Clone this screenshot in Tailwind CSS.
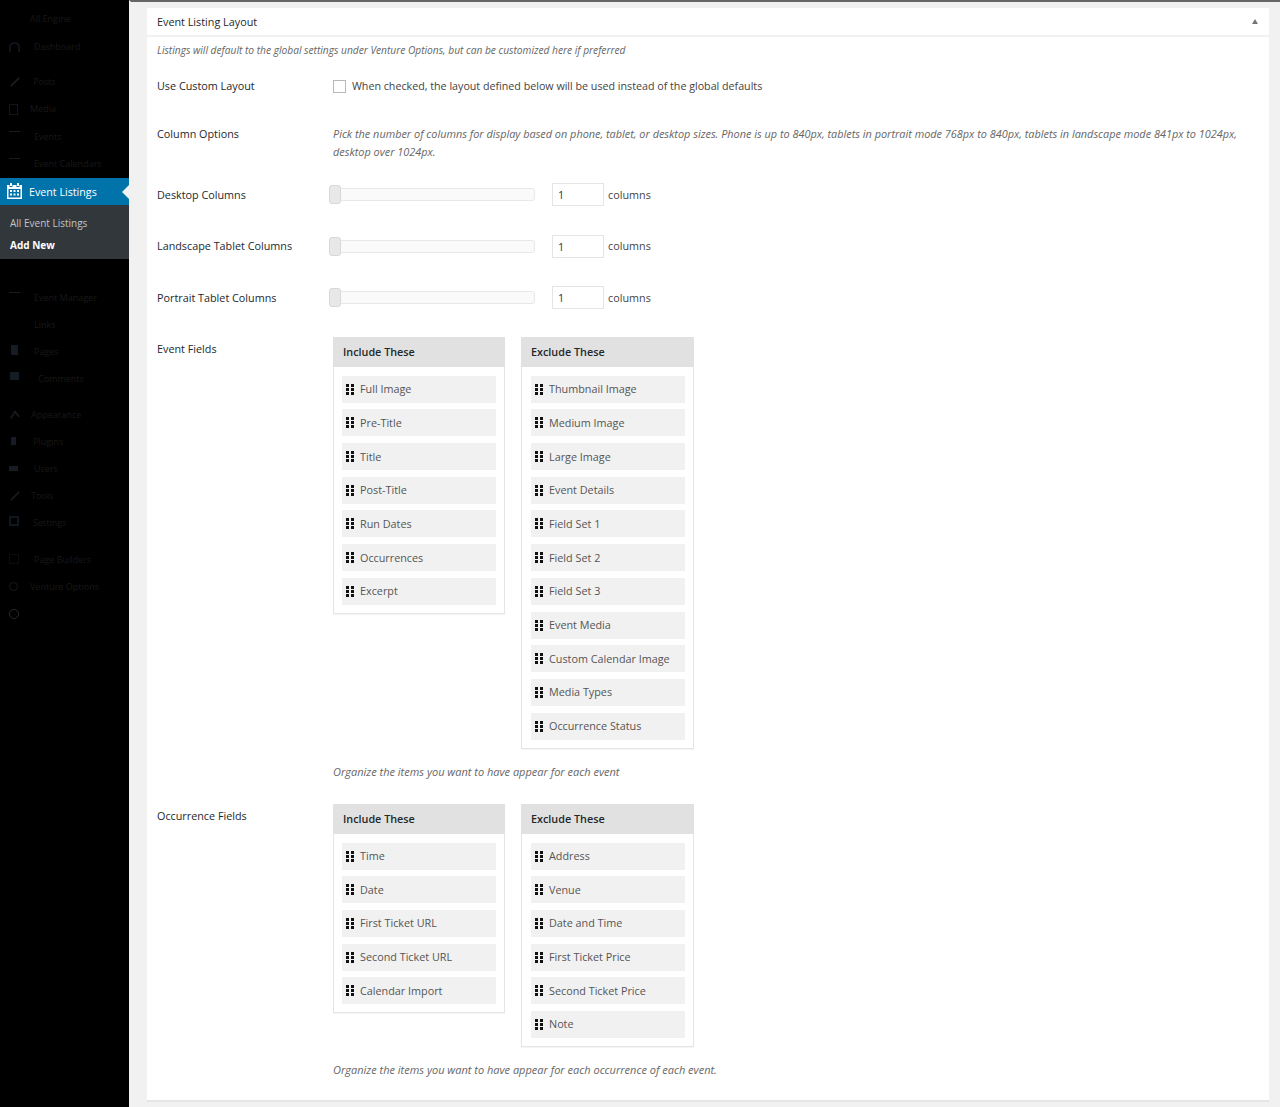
<!DOCTYPE html>
<html lang="en">
<head>
  <meta charset="UTF-8" />
  <meta name="viewport" content="width=device-width, initial-scale=1.0" />
  <title>Event Listing Layout</title>
  <script src="https://cdn.jsdelivr.net/npm/@tailwindcss/browser@4"></script>
</head>
<body class="bg-[#f1f1f1] text-[#444] font-['Open_Sans',sans-serif] text-[10.8px] leading-[18px] overflow-hidden">
<div class="flex h-[1107px] w-[1280px]">

  <!-- sidebar -->
  <aside class="w-[129px] shrink-0 bg-black text-[#181818] text-[9px]">
    <div class="h-[178px] pt-[10px]">
      <div class="h-[18px] pl-[30px]">All Engine</div>
      <div class="h-[18px] mt-[10px] pl-[34px] flex items-center relative">
        <svg class="absolute left-[9px] w-[11px] h-[11px]" viewBox="0 0 12 12" fill="none" stroke="#10161d" stroke-width="2"><path d="M1 11V6a5 5 0 0 1 10 0v5"/></svg>
        Dashboard</div>
      <div class="h-[18px] mt-[17px] pl-[33px] flex items-center relative">
        <svg class="absolute left-[10px] w-[10px] h-[10px]" viewBox="0 0 12 12" fill="none" stroke="#1a1f26" stroke-width="2"><path d="M1 11 11 1"/></svg>
        Posts</div>
      <div class="h-[18px] mt-[9px] pl-[30px] flex items-center relative">
        <span class="absolute left-[9px] w-[9px] h-[11px] border border-[#10161d]"></span>
        Media</div>
      <div class="h-[18px] mt-[10px] pl-[34px] flex items-center relative">
        <span class="absolute left-[9px] top-[3px] w-[11px] h-px bg-[#151b24]"></span>
        Events</div>
      <div class="h-[18px] mt-[9px] pl-[34px] flex items-center relative">
        <span class="absolute left-[9px] top-[3px] w-[11px] h-px bg-[#151b24]"></span>
        Event Calendars</div>
    </div>

    <div class="h-[27px] bg-[#0073aa] text-white text-[10.7px] flex items-center pl-[29px] relative">
      <svg class="absolute left-[7px] top-[5px] w-[15px] h-[16px]" viewBox="0 0 15 16" fill="#fff">
        <path d="M3 0h2v3H3zM10 0h2v3h-2z"/>
        <path fill-rule="evenodd" d="M0 2h2.500v2h3V2h4v2h3V2H15v14H0zM1.500 6v8.500h12V6zM3 7h2v2H3zM6.500 7h2v2h-2zM10 7h2v2h-2zM3 10.500h2v2H3zM6.500 10.500h2v2h-2zM10 10.500h2v2h-2z"/>
      </svg>
      Event Listings
      <span class="absolute right-0 top-[7px] border-y-[7px] border-y-transparent border-r-[7px] border-r-[#f1f1f1]"></span>
    </div>

    <div class="h-[54px] bg-[#32373c] text-[10px] pt-[9px] pl-[10px] text-[#c2c4c6]">
      <div class="h-[18px] leading-[18px]">All Event Listings</div>
      <div class="h-[18px] mt-[4px] leading-[18px] text-white font-bold">Add New</div>
    </div>

    <div class="pt-[30px]">
      <div class="h-[18px] pl-[34px] flex items-center relative">
        <span class="absolute left-[9px] top-[3px] w-[11px] h-px bg-[#151b24]"></span>
        Event Manager</div>
      <div class="h-[18px] mt-[9px] pl-[34px]">Links</div>
      <div class="h-[18px] mt-[9px] pl-[34px] flex items-center relative">
        <span class="absolute left-[11px] top-[2px] w-[7px] h-[10px] bg-[#161c24]"></span>
        Pages</div>
      <div class="h-[18px] mt-[9px] pl-[38px] flex items-center relative">
        <span class="absolute left-[10px] top-[2px] w-[9px] h-[8px] bg-[#161c24]"></span>
        Comments</div>
      <div class="h-[18px] mt-[18px] pl-[31px] flex items-center relative">
        <svg class="absolute left-[10px] w-[10px] h-[10px]" viewBox="0 0 12 12" fill="none" stroke="#161c24" stroke-width="2"><path d="M1 10 6 2l5 6"/></svg>
        Appearance</div>
      <div class="h-[18px] mt-[9px] pl-[33px] flex items-center relative">
        <span class="absolute left-[11px] top-[4px] w-[5px] h-[8px] bg-[#161c24]"></span>
        Plugins</div>
      <div class="h-[18px] mt-[9px] pl-[34px] flex items-center relative">
        <span class="absolute left-[9px] top-[6px] w-[9px] h-[5px] bg-[#161c24]"></span>
        Users</div>
      <div class="h-[18px] mt-[9px] pl-[31px] flex items-center relative">
        <svg class="absolute left-[10px] w-[10px] h-[10px]" viewBox="0 0 12 12" fill="none" stroke="#161c24" stroke-width="2"><path d="M1 11 11 1"/></svg>
        Tools</div>
      <div class="h-[18px] mt-[9px] pl-[33px] flex items-center relative">
        <span class="absolute left-[9px] top-[2px] w-[10px] h-[10px] border-2 border-[#10161d]"></span>
        Settings</div>
      <div class="h-[18px] mt-[19px] pl-[34px] flex items-center relative">
        <span class="absolute left-[9px] top-[3px] w-[10px] h-[10px] border border-[#0c0c0c]"></span>
        Page Builders</div>
      <div class="h-[18px] mt-[9px] pl-[30px] flex items-center relative">
        <span class="absolute left-[9px] top-[4px] w-[9px] h-[9px] rounded-full border border-[#1a1a1a]"></span>
        Venture Options</div>
      <div class="h-[18px] mt-[9px] relative">
        <span class="absolute left-[9px] top-[4px] w-[10px] h-[10px] rounded-full border border-[#2a2a2a]"></span>
      </div>
    </div>
  </aside>

  <!-- content -->
  <main class="flex-1 min-w-0 border-t-2 border-[#666] border-l-2 border-l-[#f1f1f1]">
    <div class="ml-[16px] mr-[11px] mt-[6px] h-[1094px] bg-white border-b-2 border-[#e5e5e5]">
      <div class="h-[29px] border-b-2 border-[#f1f1f1] pl-[10px] pr-[11px] flex items-center justify-between text-[#23282d]">
        <span>Event Listing Layout</span>
        <span class="border-x-[3px] border-x-transparent border-b-[5px] border-b-[#72777c]"></span>
      </div>

      <p class="pl-[10px] mt-[4px] text-[10.2px] italic text-[#666]">Listings will default to the global settings under Venture Options, but can be customized here if preferred</p>

      <div class="grid grid-cols-[176px_1fr] pl-[10px] pr-[16px] mt-[18px]">
        <div class="text-[#23282d]">Use Custom Layout</div>
        <div class="flex items-center gap-[6px] h-[18px] text-[10.7px]">
          <span class="w-[13px] h-[13px] border border-[#b4b9be] bg-white"></span>
          <span>When checked, the layout defined below will be used instead of the global defaults</span>
        </div>
      </div>

      <div class="grid grid-cols-[176px_1fr] pl-[10px] pr-[16px] mt-[30px]">
        <div class="text-[#23282d]">Column Options</div>
        <p class="text-[10.9px] italic text-[#666]">Pick the number of columns for display based on phone, tablet, or desktop sizes. Phone is up to 840px, tablets in portrait mode 768px to 840px, tablets in landscape mode 841px to 1024px, desktop over 1024px.</p>
      </div>

      <div class="grid grid-cols-[176px_1fr] pl-[10px] mt-[21.500px] items-center h-[24px]">
        <div class="text-[#23282d]">Desktop Columns</div>
        <div class="flex items-center">
          <div class="relative w-[202px] h-[13px] bg-[#fafafa] border border-[#e8e8e8] rounded-[3px] mr-[17px]">
            <span class="absolute left-[-5px] top-[-4px] w-[12px] h-[19px] bg-[#e8e8e8] border border-[#d8d8d8] rounded-[3px]"></span>
          </div>
          <span class="w-[52px] h-[23px] border border-[#e5e5e5] pl-[5px] leading-[21px] text-[#32373c]">1</span>
          <span class="ml-[4px]">columns</span>
        </div>
      </div>

      <div class="grid grid-cols-[176px_1fr] pl-[10px] mt-[27.500px] items-center h-[24px]">
        <div class="text-[#23282d]">Landscape Tablet Columns</div>
        <div class="flex items-center">
          <div class="relative w-[202px] h-[13px] bg-[#fafafa] border border-[#e8e8e8] rounded-[3px] mr-[17px]">
            <span class="absolute left-[-5px] top-[-4px] w-[12px] h-[19px] bg-[#e8e8e8] border border-[#d8d8d8] rounded-[3px]"></span>
          </div>
          <span class="w-[52px] h-[23px] border border-[#e5e5e5] pl-[5px] leading-[21px] text-[#32373c]">1</span>
          <span class="ml-[4px]">columns</span>
        </div>
      </div>

      <div class="grid grid-cols-[176px_1fr] pl-[10px] mt-[27.500px] items-center h-[24px]">
        <div class="text-[#23282d]">Portrait Tablet Columns</div>
        <div class="flex items-center">
          <div class="relative w-[202px] h-[13px] bg-[#fafafa] border border-[#e8e8e8] rounded-[3px] mr-[17px]">
            <span class="absolute left-[-5px] top-[-4px] w-[12px] h-[19px] bg-[#e8e8e8] border border-[#d8d8d8] rounded-[3px]"></span>
          </div>
          <span class="w-[52px] h-[23px] border border-[#e5e5e5] pl-[5px] leading-[21px] text-[#32373c]">1</span>
          <span class="ml-[4px]">columns</span>
        </div>
      </div>

      <!-- event fields -->
      <div class="grid grid-cols-[176px_1fr] pl-[10px] mt-[27.500px]">
        <div class="text-[#23282d] pt-[3px]">Event Fields</div>
        <div>
          <div class="flex items-start gap-[16px] text-[#555]">
            <div class="w-[172px] border border-[#e5e5e5] shadow-[0_1px_1px_rgba(0,0,0,0.04)]">
              <div class="h-[30px] -m-px mb-0 bg-[#e1e1e1] pl-[10px] flex items-center font-semibold text-[#23282d]">Include These</div>
              <ul class="px-[8px] pt-[8.700px] pb-[3px] space-y-[6.700px]">
                <li class="h-[27px] bg-[#f1f1f1] flex items-center gap-[5px] pl-[4px]"><svg class="w-[9px] h-[11px]" viewBox="0 0 9 11" fill="#111"><path d="M0 0h3v3H0zM5 0h3v3H5zM0 4h3v3H0zM5 4h3v3H5zM0 8h3v3H0zM5 8h3v3H5z"/></svg>Full Image</li>
                <li class="h-[27px] bg-[#f1f1f1] flex items-center gap-[5px] pl-[4px]"><svg class="w-[9px] h-[11px]" viewBox="0 0 9 11" fill="#111"><path d="M0 0h3v3H0zM5 0h3v3H5zM0 4h3v3H0zM5 4h3v3H5zM0 8h3v3H0zM5 8h3v3H5z"/></svg>Pre-Title</li>
                <li class="h-[27px] bg-[#f1f1f1] flex items-center gap-[5px] pl-[4px]"><svg class="w-[9px] h-[11px]" viewBox="0 0 9 11" fill="#111"><path d="M0 0h3v3H0zM5 0h3v3H5zM0 4h3v3H0zM5 4h3v3H5zM0 8h3v3H0zM5 8h3v3H5z"/></svg>Title</li>
                <li class="h-[27px] bg-[#f1f1f1] flex items-center gap-[5px] pl-[4px]"><svg class="w-[9px] h-[11px]" viewBox="0 0 9 11" fill="#111"><path d="M0 0h3v3H0zM5 0h3v3H5zM0 4h3v3H0zM5 4h3v3H5zM0 8h3v3H0zM5 8h3v3H5z"/></svg>Post-Title</li>
                <li class="h-[27px] bg-[#f1f1f1] flex items-center gap-[5px] pl-[4px]"><svg class="w-[9px] h-[11px]" viewBox="0 0 9 11" fill="#111"><path d="M0 0h3v3H0zM5 0h3v3H5zM0 4h3v3H0zM5 4h3v3H5zM0 8h3v3H0zM5 8h3v3H5z"/></svg>Run Dates</li>
                <li class="h-[27px] bg-[#f1f1f1] flex items-center gap-[5px] pl-[4px]"><svg class="w-[9px] h-[11px]" viewBox="0 0 9 11" fill="#111"><path d="M0 0h3v3H0zM5 0h3v3H5zM0 4h3v3H0zM5 4h3v3H5zM0 8h3v3H0zM5 8h3v3H5z"/></svg>Occurrences</li>
                <li class="h-[27px] bg-[#f1f1f1] flex items-center gap-[5px] pl-[4px] mb-[5px]"><svg class="w-[9px] h-[11px]" viewBox="0 0 9 11" fill="#111"><path d="M0 0h3v3H0zM5 0h3v3H5zM0 4h3v3H0zM5 4h3v3H5zM0 8h3v3H0zM5 8h3v3H5z"/></svg>Excerpt</li>
              </ul>
            </div>
            <div class="w-[173px] border border-[#e5e5e5] shadow-[0_1px_1px_rgba(0,0,0,0.04)]">
              <div class="h-[30px] -m-px mb-0 bg-[#e1e1e1] pl-[10px] flex items-center font-semibold text-[#23282d]">Exclude These</div>
              <ul class="pl-[9px] pr-[8px] pt-[8.700px] pb-[3px] space-y-[6.700px]">
                <li class="h-[27px] bg-[#f1f1f1] flex items-center gap-[5px] pl-[4px]"><svg class="w-[9px] h-[11px]" viewBox="0 0 9 11" fill="#111"><path d="M0 0h3v3H0zM5 0h3v3H5zM0 4h3v3H0zM5 4h3v3H5zM0 8h3v3H0zM5 8h3v3H5z"/></svg>Thumbnail Image</li>
                <li class="h-[27px] bg-[#f1f1f1] flex items-center gap-[5px] pl-[4px]"><svg class="w-[9px] h-[11px]" viewBox="0 0 9 11" fill="#111"><path d="M0 0h3v3H0zM5 0h3v3H5zM0 4h3v3H0zM5 4h3v3H5zM0 8h3v3H0zM5 8h3v3H5z"/></svg>Medium Image</li>
                <li class="h-[27px] bg-[#f1f1f1] flex items-center gap-[5px] pl-[4px]"><svg class="w-[9px] h-[11px]" viewBox="0 0 9 11" fill="#111"><path d="M0 0h3v3H0zM5 0h3v3H5zM0 4h3v3H0zM5 4h3v3H5zM0 8h3v3H0zM5 8h3v3H5z"/></svg>Large Image</li>
                <li class="h-[27px] bg-[#f1f1f1] flex items-center gap-[5px] pl-[4px]"><svg class="w-[9px] h-[11px]" viewBox="0 0 9 11" fill="#111"><path d="M0 0h3v3H0zM5 0h3v3H5zM0 4h3v3H0zM5 4h3v3H5zM0 8h3v3H0zM5 8h3v3H5z"/></svg>Event Details</li>
                <li class="h-[27px] bg-[#f1f1f1] flex items-center gap-[5px] pl-[4px]"><svg class="w-[9px] h-[11px]" viewBox="0 0 9 11" fill="#111"><path d="M0 0h3v3H0zM5 0h3v3H5zM0 4h3v3H0zM5 4h3v3H5zM0 8h3v3H0zM5 8h3v3H5z"/></svg>Field Set 1</li>
                <li class="h-[27px] bg-[#f1f1f1] flex items-center gap-[5px] pl-[4px]"><svg class="w-[9px] h-[11px]" viewBox="0 0 9 11" fill="#111"><path d="M0 0h3v3H0zM5 0h3v3H5zM0 4h3v3H0zM5 4h3v3H5zM0 8h3v3H0zM5 8h3v3H5z"/></svg>Field Set 2</li>
                <li class="h-[27px] bg-[#f1f1f1] flex items-center gap-[5px] pl-[4px]"><svg class="w-[9px] h-[11px]" viewBox="0 0 9 11" fill="#111"><path d="M0 0h3v3H0zM5 0h3v3H5zM0 4h3v3H0zM5 4h3v3H5zM0 8h3v3H0zM5 8h3v3H5z"/></svg>Field Set 3</li>
                <li class="h-[27px] bg-[#f1f1f1] flex items-center gap-[5px] pl-[4px]"><svg class="w-[9px] h-[11px]" viewBox="0 0 9 11" fill="#111"><path d="M0 0h3v3H0zM5 0h3v3H5zM0 4h3v3H0zM5 4h3v3H5zM0 8h3v3H0zM5 8h3v3H5z"/></svg>Event Media</li>
                <li class="h-[27px] bg-[#f1f1f1] flex items-center gap-[5px] pl-[4px]"><svg class="w-[9px] h-[11px]" viewBox="0 0 9 11" fill="#111"><path d="M0 0h3v3H0zM5 0h3v3H5zM0 4h3v3H0zM5 4h3v3H5zM0 8h3v3H0zM5 8h3v3H5z"/></svg>Custom Calendar Image</li>
                <li class="h-[27px] bg-[#f1f1f1] flex items-center gap-[5px] pl-[4px]"><svg class="w-[9px] h-[11px]" viewBox="0 0 9 11" fill="#111"><path d="M0 0h3v3H0zM5 0h3v3H5zM0 4h3v3H0zM5 4h3v3H5zM0 8h3v3H0zM5 8h3v3H5z"/></svg>Media Types</li>
                <li class="h-[27px] bg-[#f1f1f1] flex items-center gap-[5px] pl-[4px] mb-[5px]"><svg class="w-[9px] h-[11px]" viewBox="0 0 9 11" fill="#111"><path d="M0 0h3v3H0zM5 0h3v3H5zM0 4h3v3H0zM5 4h3v3H5zM0 8h3v3H0zM5 8h3v3H5z"/></svg>Occurrence Status</li>
              </ul>
            </div>
          </div>
          <p class="mt-[14.300px] text-[11px] italic text-[#666]">Organize the items you want to have appear for each event</p>
        </div>
      </div>

      <!-- occurrence fields -->
      <div class="grid grid-cols-[176px_1fr] pl-[10px] mt-[23px]">
        <div class="text-[#23282d] pt-[3px]">Occurrence Fields</div>
        <div>
          <div class="flex items-start gap-[16px] text-[#555]">
            <div class="w-[172px] border border-[#e5e5e5] shadow-[0_1px_1px_rgba(0,0,0,0.04)]">
              <div class="h-[30px] -m-px mb-0 bg-[#e1e1e1] pl-[10px] flex items-center font-semibold text-[#23282d]">Include These</div>
              <ul class="px-[8px] pt-[8.700px] pb-[3px] space-y-[6.700px]">
                <li class="h-[27px] bg-[#f1f1f1] flex items-center gap-[5px] pl-[4px]"><svg class="w-[9px] h-[11px]" viewBox="0 0 9 11" fill="#111"><path d="M0 0h3v3H0zM5 0h3v3H5zM0 4h3v3H0zM5 4h3v3H5zM0 8h3v3H0zM5 8h3v3H5z"/></svg>Time</li>
                <li class="h-[27px] bg-[#f1f1f1] flex items-center gap-[5px] pl-[4px]"><svg class="w-[9px] h-[11px]" viewBox="0 0 9 11" fill="#111"><path d="M0 0h3v3H0zM5 0h3v3H5zM0 4h3v3H0zM5 4h3v3H5zM0 8h3v3H0zM5 8h3v3H5z"/></svg>Date</li>
                <li class="h-[27px] bg-[#f1f1f1] flex items-center gap-[5px] pl-[4px]"><svg class="w-[9px] h-[11px]" viewBox="0 0 9 11" fill="#111"><path d="M0 0h3v3H0zM5 0h3v3H5zM0 4h3v3H0zM5 4h3v3H5zM0 8h3v3H0zM5 8h3v3H5z"/></svg>First Ticket URL</li>
                <li class="h-[27px] bg-[#f1f1f1] flex items-center gap-[5px] pl-[4px]"><svg class="w-[9px] h-[11px]" viewBox="0 0 9 11" fill="#111"><path d="M0 0h3v3H0zM5 0h3v3H5zM0 4h3v3H0zM5 4h3v3H5zM0 8h3v3H0zM5 8h3v3H5z"/></svg>Second Ticket URL</li>
                <li class="h-[27px] bg-[#f1f1f1] flex items-center gap-[5px] pl-[4px] mb-[5px]"><svg class="w-[9px] h-[11px]" viewBox="0 0 9 11" fill="#111"><path d="M0 0h3v3H0zM5 0h3v3H5zM0 4h3v3H0zM5 4h3v3H5zM0 8h3v3H0zM5 8h3v3H5z"/></svg>Calendar Import</li>
              </ul>
            </div>
            <div class="w-[173px] border border-[#e5e5e5] shadow-[0_1px_1px_rgba(0,0,0,0.04)]">
              <div class="h-[30px] -m-px mb-0 bg-[#e1e1e1] pl-[10px] flex items-center font-semibold text-[#23282d]">Exclude These</div>
              <ul class="pl-[9px] pr-[8px] pt-[8.700px] pb-[3px] space-y-[6.700px]">
                <li class="h-[27px] bg-[#f1f1f1] flex items-center gap-[5px] pl-[4px]"><svg class="w-[9px] h-[11px]" viewBox="0 0 9 11" fill="#111"><path d="M0 0h3v3H0zM5 0h3v3H5zM0 4h3v3H0zM5 4h3v3H5zM0 8h3v3H0zM5 8h3v3H5z"/></svg>Address</li>
                <li class="h-[27px] bg-[#f1f1f1] flex items-center gap-[5px] pl-[4px]"><svg class="w-[9px] h-[11px]" viewBox="0 0 9 11" fill="#111"><path d="M0 0h3v3H0zM5 0h3v3H5zM0 4h3v3H0zM5 4h3v3H5zM0 8h3v3H0zM5 8h3v3H5z"/></svg>Venue</li>
                <li class="h-[27px] bg-[#f1f1f1] flex items-center gap-[5px] pl-[4px]"><svg class="w-[9px] h-[11px]" viewBox="0 0 9 11" fill="#111"><path d="M0 0h3v3H0zM5 0h3v3H5zM0 4h3v3H0zM5 4h3v3H5zM0 8h3v3H0zM5 8h3v3H5z"/></svg>Date and Time</li>
                <li class="h-[27px] bg-[#f1f1f1] flex items-center gap-[5px] pl-[4px]"><svg class="w-[9px] h-[11px]" viewBox="0 0 9 11" fill="#111"><path d="M0 0h3v3H0zM5 0h3v3H5zM0 4h3v3H0zM5 4h3v3H5zM0 8h3v3H0zM5 8h3v3H5z"/></svg>First Ticket Price</li>
                <li class="h-[27px] bg-[#f1f1f1] flex items-center gap-[5px] pl-[4px]"><svg class="w-[9px] h-[11px]" viewBox="0 0 9 11" fill="#111"><path d="M0 0h3v3H0zM5 0h3v3H5zM0 4h3v3H0zM5 4h3v3H5zM0 8h3v3H0zM5 8h3v3H5z"/></svg>Second Ticket Price</li>
                <li class="h-[27px] bg-[#f1f1f1] flex items-center gap-[5px] pl-[4px] mb-[5px]"><svg class="w-[9px] h-[11px]" viewBox="0 0 9 11" fill="#111"><path d="M0 0h3v3H0zM5 0h3v3H5zM0 4h3v3H0zM5 4h3v3H5zM0 8h3v3H0zM5 8h3v3H5z"/></svg>Note</li>
              </ul>
            </div>
          </div>
          <p class="mt-[13.700px] text-[11px] italic text-[#666]">Organize the items you want to have appear for each occurrence of each event.</p>
        </div>
      </div>
    </div>
  </main>
</div>
</body>
</html>
